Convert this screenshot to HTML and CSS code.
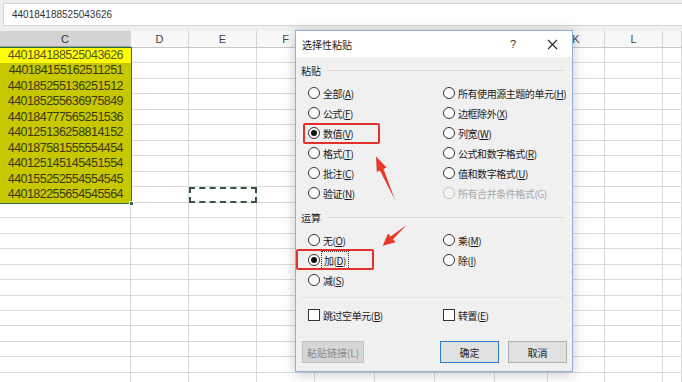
FILE: index.html
```html
<!DOCTYPE html>
<html lang="zh-CN">
<head>
<meta charset="utf-8">
<title>选择性粘贴</title>
<link rel="stylesheet" href="styles.css">
</head>
<body>
<div class="app">
  <div class="formula-band">
    <div class="formula-box">440184188525043626</div>
  </div>
  <div class="col-headers">
    <div class="hcell w-c sel-h">C</div>
    <div class="hcell w-d">D</div>
    <div class="hcell w-e">E</div>
    <div class="hcell w-f">F</div>
    <div class="hcell w-g"></div>
    <div class="hcell w-g"></div>
    <div class="hcell w-g"></div>
    <div class="hcell w-j"></div>
    <div class="hcell w-k">K</div>
    <div class="hcell w-l">L</div>
    <div class="hcell w-m"></div>
  </div>
  <div class="sheet">
    <div class="col w-c">
      <div class="selection">
        <div class="cell active">440184188525043626</div>
        <div class="cell">440184155162511251</div>
        <div class="cell">440185255136251512</div>
        <div class="cell">440185255636975849</div>
        <div class="cell">440184777565251536</div>
        <div class="cell">440125136258814152</div>
        <div class="cell">440187581555554454</div>
        <div class="cell">440125145145451554</div>
        <div class="cell">440155252554554545</div>
        <div class="cell">440182255654545564</div>
        <span class="fill-handle"></span>
      </div>
    </div>
    <div class="col w-d"></div>
    <div class="col w-e"></div>
    <div class="col w-f"></div>
    <div class="col w-g"></div>
    <div class="col w-g"></div>
    <div class="col w-g"></div>
    <div class="col w-j"></div>
    <div class="col w-k"></div>
    <div class="col w-l"></div>
    <div class="col w-m"></div>
    <div class="copy-marquee"></div>
  </div>

  <div class="dialog">
    <div class="dlg-title">
      <span class="dlg-caption">选择性粘贴</span>
      <span class="dlg-help">?</span>
      <svg class="dlg-close" width="11" height="11" viewBox="0 0 11 11"><path d="M1 1 L10 10 M10 1 L1 10" stroke="#222" stroke-width="1.1" fill="none"/></svg>
    </div>
    <div class="dlg-body">
      <div class="group-label"><span>粘贴</span><i class="rule"></i></div>
      <div class="opt-grid">
        <label class="opt"><span class="radio"></span><span>全部(<u>A</u>)</span></label>
        <label class="opt"><span class="radio"></span><span>所有使用源主题的单元(<u>H</u>)</span></label>
        <label class="opt"><span class="radio"></span><span>公式(<u>F</u>)</span></label>
        <label class="opt"><span class="radio"></span><span>边框除外(<u>X</u>)</span></label>
        <label class="opt"><span class="radio on"></span><span>数值(<u>V</u>)</span></label>
        <label class="opt"><span class="radio"></span><span>列宽(<u>W</u>)</span></label>
        <label class="opt"><span class="radio"></span><span>格式(<u>T</u>)</span></label>
        <label class="opt"><span class="radio"></span><span>公式和数字格式(<u>R</u>)</span></label>
        <label class="opt"><span class="radio"></span><span>批注(<u>C</u>)</span></label>
        <label class="opt"><span class="radio"></span><span>值和数字格式(<u>U</u>)</span></label>
        <label class="opt"><span class="radio"></span><span>验证(<u>N</u>)</span></label>
        <label class="opt disabled"><span class="radio"></span><span>所有合并条件格式(G)</span></label>
      </div>
      <div class="group-label op-label"><span>运算</span><i class="rule"></i></div>
      <div class="opt-grid">
        <label class="opt"><span class="radio"></span><span>无(<u>O</u>)</span></label>
        <label class="opt"><span class="radio"></span><span>乘(<u>M</u>)</span></label>
        <label class="opt"><span class="radio on"></span><span class="focus">加(<u>D</u>)</span></label>
        <label class="opt"><span class="radio"></span><span>除(<u>I</u>)</span></label>
        <label class="opt"><span class="radio"></span><span>减(<u>S</u>)</span></label>
      </div>
      <div class="separator"></div>
      <div class="opt-grid check-row">
        <label class="opt"><span class="check"></span><span>跳过空单元(<u>B</u>)</span></label>
        <label class="opt"><span class="check"></span><span>转置(<u>E</u>)</span></label>
      </div>
      <div class="buttons">
        <button class="btn disabled-btn">粘贴链接(L)</button>
        <span class="spacer"></span>
        <button class="btn default-btn">确定</button>
        <button class="btn">取消</button>
      </div>
    </div>
  </div>

  <div class="mark mark-1"></div>
  <div class="mark mark-2"></div>
  <svg class="arrows" width="682" height="382" viewBox="0 0 682 382">
    <polygon points="395,200 383.5,169 386.6,167.6 376,156.5 376.8,172 379.9,170.6" fill="#e8392a"/>
    <polygon points="406.7,225 393,239.3 395.6,242.3 382.7,245.7 388,233.5 390.6,236.5" fill="#e8392a"/>
  </svg>
</div>
</body>
</html>
```
FILE: styles.css
```css
* { box-sizing: border-box; }
html, body { margin: 0; padding: 0; }
body {
  width: 682px;
  height: 382px;
  overflow: hidden;
  background: #fff;
  font-family: "Liberation Sans", Arial, "Noto Sans CJK SC", sans-serif;
}
.app {
  position: relative;
  width: 682px;
  height: 382px;
  overflow: hidden;
}

/* formula bar */
.formula-band {
  height: 31px;
  background: #eeeeee;
  padding: 3px 0 5px 3px;
}
.formula-box {
  height: 23px;
  background: #fff;
  border: 1px solid #d6d6d6;
  border-right: none;
  padding-left: 8px;
  font-size: 10px;
  line-height: 21px;
  color: #333;
}

/* column widths */
.w-c { width: 131px; }
.w-d { width: 58px; }
.w-e { width: 68px; }
.w-f { width: 58px; }
.w-g { width: 60px; }
.w-j { width: 53px; }
.w-k { width: 57px; }
.w-l { width: 58px; }
.w-m { flex: 1; }

.col-headers {
  display: flex;
  height: 17px;
  background: #f8f8f8;
  border-bottom: 1px solid #c6c6c6;
}
.hcell {
  flex-shrink: 0;
  border-right: 1px solid #d4d4d4;
  text-align: center;
  font-size: 11px;
  line-height: 16px;
  color: #444;
}
.hcell.w-m { flex: 1; }
.hcell.sel-h {
  background: #d3d3d3;
  color: #333;
  border-bottom: 1px solid #9a9a9a;
}

/* sheet body */
.sheet {
  position: relative;
  display: flex;
  height: 334px;
  background: repeating-linear-gradient(to bottom, transparent 0, transparent 14.47px, #d9d9d9 14.47px, #d9d9d9 15.47px);
}
.col {
  flex-shrink: 0;
  height: 100%;
  border-right: 1px solid #d9d9d9;
}
.col.w-m { flex: 1; }
.selection {
  position: relative;
  margin-right: -1px;
  outline: 1.5px solid #2b6e3f;
}
.cell {
  height: 15.47px;
  background: #c8c800;
  text-align: right;
  padding-right: 8px;
  font-size: 12.5px;
  letter-spacing: -0.55px;
  line-height: 15.47px;
  color: #3a3a12;
}
.cell.active {
  background: #ffff00;
  color: #555530;
}
.fill-handle {
  position: absolute;
  right: -3px;
  bottom: -3px;
  width: 5px;
  height: 5px;
  background: #2b6e3f;
  border: 1px solid #fff;
}
.copy-marquee {
  position: absolute;
  left: 189px;
  top: 139px;
  width: 68px;
  height: 16px;
  border: 2px dashed #35563c;
}

/* dialog */
.dialog {
  position: absolute;
  left: 295px;
  top: 30px;
  width: 278px;
  height: 342px;
  background: #f0f0f0;
  border: 1px solid #8fb1d9;
  box-shadow: 0 2px 12px rgba(0, 0, 0, 0.22);
  font-family: "Noto Sans CJK SC", "Liberation Sans", sans-serif;
  font-size: 10px;
  color: #1a1a1a;
  display: flex;
  flex-direction: column;
}
.dlg-title {
  height: 26px;
  background: #fff;
  display: flex;
  align-items: center;
  padding-left: 6px;
  flex-shrink: 0;
}
.dlg-caption { flex: 1; font-size: 10px; color: #222; }
.dlg-help { width: 12px; margin-right: 25px; font-family: "Liberation Sans", sans-serif; font-size: 11px; color: #333; }
.dlg-close { margin-right: 14px; }

.dlg-body {
  flex: 1;
  padding: 3px 5px 0 5px;
  display: flex;
  flex-direction: column;
}
.group-label {
  height: 20px;
  display: flex;
  align-items: center;
  gap: 6px;
  color: #222;
}
.group-label .rule {
  flex: 1;
  height: 1px;
  background: #dcdcdc;
  margin-right: 2px;
}
.op-label { margin-top: 4px; }
.opt-grid {
  margin-top: 3px;
  padding-left: 7px;
  display: grid;
  grid-template-columns: 135px 1fr;
  grid-auto-rows: 20px;
}
.opt {
  display: flex;
  align-items: center;
  gap: 3px;
  white-space: nowrap;
  color: #1a1a1a;
  letter-spacing: -0.45px;
}
.opt u { text-decoration-thickness: 1px; text-underline-offset: 1px; }
.opt.disabled { color: #a8a8a8; }
.radio {
  width: 12px;
  height: 12px;
  border-radius: 50%;
  border: 1px solid #333;
  background: #fff;
  flex-shrink: 0;
  display: flex;
  align-items: center;
  justify-content: center;
}
.radio.on::after {
  content: "";
  width: 6px;
  height: 6px;
  border-radius: 50%;
  background: #111;
}
.opt.disabled .radio { border-color: #c4c4c4; background: #f4f4f4; }
.focus {
  outline: 1px dotted #333;
  outline-offset: 1px;
  padding: 0 1px;
}
.check {
  width: 12px;
  height: 12px;
  border: 1px solid #333;
  background: #fff;
  flex-shrink: 0;
}
.separator {
  margin-top: 7px;
  height: 1px;
  background: #e2e2e2;
  margin-right: 2px;
}
.check-row { margin-top: 7px; }
.buttons {
  margin-top: 16px;
  display: flex;
  align-items: center;
  gap: 9px;
  padding-left: 1px;
  padding-right: 0;
}
.spacer { flex: 1; }
.btn {
  height: 22px;
  width: 59px;
  background: #e1e1e1;
  border: 1px solid #adadad;
  font-family: "Noto Sans CJK SC", "Liberation Sans", sans-serif;
  font-size: 10px;
  color: #222;
  padding: 0;
}
.btn.disabled-btn {
  width: 62px;
  background: #d6d6d6;
  border-color: #c2c2c2;
  color: #8a8a8a;
}
.btn.default-btn {
  border: 1.5px solid #2f7ccc;
}

/* annotations */
.mark {
  position: absolute;
  border: 2px solid #e3322b;
  border-radius: 2px;
}
.mark-1 { left: 303px; top: 123px; width: 77px; height: 21px; }
.mark-2 { left: 296px; top: 249px; width: 78px; height: 21px; }
.arrows {
  position: absolute;
  left: 0;
  top: 0;
  pointer-events: none;
}
```
